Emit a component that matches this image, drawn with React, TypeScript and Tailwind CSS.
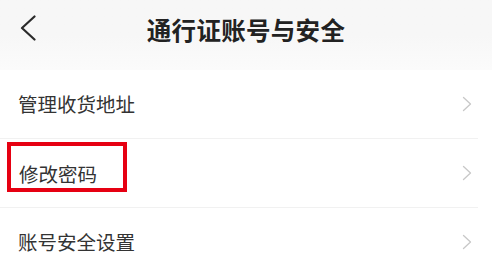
import React from 'react';

const rows = ['管理收货地址', '修改密码', '账号安全设置'];

const font = { fontFamily: '"Noto Sans CJK SC", "Noto Sans", sans-serif' };

const Chevron = ({ className }: { className?: string }) => (
  <svg viewBox="0 0 10 16" className={className} fill="none" stroke="currentColor" strokeWidth="1.3" strokeLinecap="round" strokeLinejoin="round">
    <path d="M1.5 1.5 L8.5 8 L1.5 14.5" />
  </svg>
);

export default function App() {
  return (
    <div className="w-[492px] h-[255px] overflow-hidden bg-white" style={font}>
      {/* header */}
      <div className="relative h-[70px] bg-gradient-to-b from-[#f7f7f7] via-[#f7f7f7] to-[#fbfbfb] flex items-center justify-center">
        <button className="absolute left-[20px] top-[15px] text-[#2a2a2a]">
          <svg viewBox="0 0 16 26" className="w-[16px] h-[26px]" fill="none" stroke="currentColor" strokeWidth="2.2" strokeLinecap="round" strokeLinejoin="round">
            <path d="M14.5 1.5 L2 13 L14.5 24.5" />
          </svg>
        </button>
        <h1 className="text-[24.5px] font-bold text-[#222] leading-none -mt-[10px] tracking-[0.3px]">通行证账号与安全</h1>
      </div>

      {/* list */}
      <div className="flex flex-col">
        {rows.map((label, i) => (
          <div key={label} className="flex flex-col">
            <div className="h-[68px] flex items-center justify-between pl-[18px] pr-[20px]">
              {i === 1 ? (
                <span className="-ml-[11px] -mt-[12px] border-[4px] border-[#e60012] pl-[8px] pr-[26px] pt-[18px] pb-[4px] text-[19.5px] leading-none text-[#333]">
                  {label}
                </span>
              ) : (
                <span className="text-[19.5px] leading-none text-[#333]">{label}</span>
              )}
              <Chevron className="w-[10px] h-[16px] text-[#c8c8c8]" />
            </div>
            <div className="h-px bg-[#f1f1f1] mr-[14px]" />
          </div>
        ))}
      </div>
    </div>
  );
}
